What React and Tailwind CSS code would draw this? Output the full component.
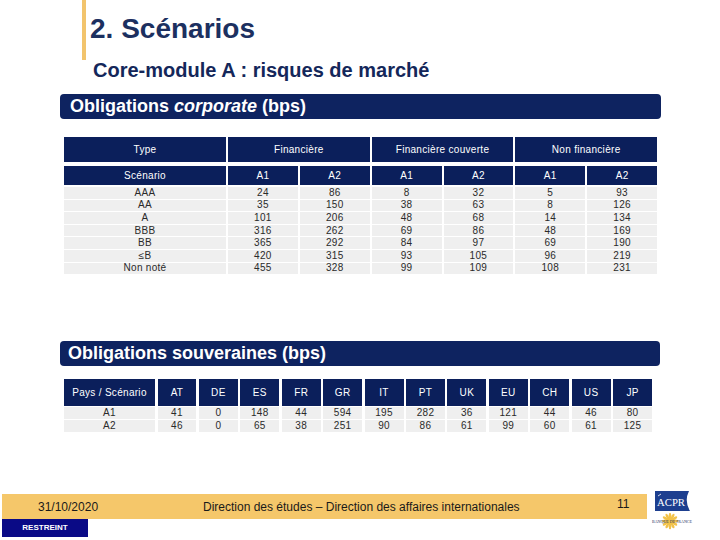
import React from "react";

const corpRows = [
  ["AAA", 24, 86, 8, 32, 5, 93],
  ["AA", 35, 150, 38, 63, 8, 126],
  ["A", 101, 206, 48, 68, 14, 134],
  ["BBB", 316, 262, 69, 86, 48, 169],
  ["BB", 365, 292, 84, 97, 69, 190],
  ["≤B", 420, 315, 93, 105, 96, 219],
  ["Non noté", 455, 328, 99, 109, 108, 231],
];

const pays = ["AT", "DE", "ES", "FR", "GR", "IT", "PT", "UK", "EU", "CH", "US", "JP"];
const souvRows = [
  ["A1", 41, 0, 148, 44, 594, 195, 282, 36, 121, 44, 46, 80],
  ["A2", 46, 0, 65, 38, 251, 90, 86, 61, 99, 60, 61, 125],
];

const Head = ({ children, span }) => (
  <div
    className={`flex items-center justify-center bg-[#0b1f5b] text-white ${span ? "col-span-2" : ""}`}
  >
    {children}
  </div>
);

const AcprLogo = () => (
  <svg width="48" height="42" viewBox="0 0 48 42">
    <path d="M7 2 H41 Q36 12 42 22 H7 Z" fill="#1d3f8f" />
    <text x="9" y="17" fill="#fff" fontSize="10" textLength="28" lengthAdjust="spacingAndGlyphs" fontFamily="Liberation Serif, serif">
      ACPR
    </text>
    <path d="M10 7 L13 5" stroke="#fff" strokeWidth="0.8" />
    <g fill="#f1c24a">
      <circle cx="22" cy="32" r="4" />
      {[0, 30, 60, 90, 120, 150, 180, 210, 240, 270, 300, 330].map((a) => (
        <ellipse key={a} cx="22" cy="26.5" rx="1.3" ry="2.8" transform={`rotate(${a} 22 32)`} />
      ))}
    </g>
    <text x="24" y="34" textAnchor="middle" fill="#1c2d5a" fontSize="4" textLength="40" lengthAdjust="spacingAndGlyphs" fontFamily="Liberation Serif, serif">
      BANQUE DE FRANCE
    </text>
  </svg>
);

export default function App() {
  return (
    <div className="w-[720px] h-[540px] bg-white flex flex-col overflow-hidden font-['Liberation_Sans',Arial,sans-serif]">
      {/* titre */}
      <div className="h-[60px] ml-[82px] border-l-[4px] border-[#f2c46d] pl-[4px] pt-[13px]">
        <div className="text-[28px] leading-[32px] font-bold text-[#1c3060]">2. Scénarios</div>
      </div>
      <div className="ml-[93px] text-[20px] leading-[20px] font-bold text-[#14275a]">
        Core-module A : risques de marché
      </div>

      {/* Obligations corporate */}
      <div className="mt-[14px] ml-[60px] w-[601px] h-[25px] rounded-[4px] bg-[#0e2360] flex items-center pl-[10px] text-white text-[18px] font-bold">
        Obligations&nbsp;<i>corporate</i>&nbsp;(bps)
      </div>

      <div className="mt-[18px] ml-[64px] w-[593px] text-[10px] tracking-[0.3px] text-[#2a2a2a]">
        <div className="grid grid-cols-[162px_repeat(6,1fr)] gap-x-[2px] h-[25px]">
          <Head>Type</Head>
          <Head span>Financière</Head>
          <Head span>Financière couverte</Head>
          <Head span>Non financière</Head>
        </div>
        <div className="grid grid-cols-[162px_repeat(6,1fr)] gap-x-[2px] h-[19px] mt-[4px]">
          <Head>Scénario</Head>
          <Head>A1</Head>
          <Head>A2</Head>
          <Head>A1</Head>
          <Head>A2</Head>
          <Head>A1</Head>
          <Head>A2</Head>
        </div>
        <div className="mt-[2px] flex flex-col gap-y-[1px]">
          {corpRows.map((r) => (
            <div key={r[0]} className="grid grid-cols-[162px_repeat(6,1fr)] gap-x-[2px] h-[11.6px]">
              {r.map((c, i) => (
                <div key={i} className="bg-[#efefef] flex items-center justify-center leading-none">
                  {c}
                </div>
              ))}
            </div>
          ))}
        </div>
      </div>

      {/* Obligations souveraines */}
      <div className="mt-[67px] ml-[60px] w-[600px] h-[25px] rounded-[4px] bg-[#0e2360] flex items-center pl-[8px] text-white text-[18px] font-bold">
        Obligations souveraines (bps)
      </div>

      <div className="mt-[13px] ml-[64px] w-[588px] text-[10px] tracking-[0.3px] text-[#2a2a2a]">
        <div className="grid grid-cols-[91px_repeat(12,1fr)] gap-x-[2.5px] h-[27px]">
          <Head>Pays / Scénario</Head>
          {pays.map((p) => (
            <Head key={p}>{p}</Head>
          ))}
        </div>
        <div className="mt-[1px] flex flex-col gap-y-[1px]">
          {souvRows.map((r) => (
            <div key={r[0]} className="grid grid-cols-[91px_repeat(12,1fr)] gap-x-[2.5px] h-[12px]">
              {r.map((c, i) => (
                <div key={i} className="bg-[#efefef] flex items-center justify-center leading-none">
                  {c}
                </div>
              ))}
            </div>
          ))}
        </div>
      </div>

      {/* pied de page */}
      <div className="mt-[57px] flex items-start">
        <div className="flex flex-col">
          <div className="mt-[5px] ml-[2px] w-[645px] h-[25px] bg-[#f5c76a] flex items-center text-[12px] text-[#1a1a1a]">
            <span className="w-[201px] pl-[36px]">31/10/2020</span>
            <span className="w-[412px]">Direction des études – Direction des affaires internationales</span>
            <span className="pl-[2px] -mt-[6px]">11</span>
          </div>
          <div className="ml-[2px] w-[86px] h-[18px] bg-[#0a0a86] flex items-center justify-center text-white text-[8px] font-bold">
            RESTREINT
          </div>
        </div>
        <div className="ml-[1px]">
          <AcprLogo />
        </div>
      </div>
    </div>
  );
}
